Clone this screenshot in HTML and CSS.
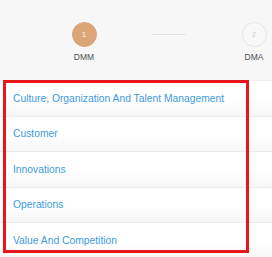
FILE: index.html
```html
<!DOCTYPE html>
<html lang="en">
<head>
    <meta charset="UTF-8">
    <meta name="viewport" content="width=device-width, initial-scale=1.0">
    <title>Assessment</title>
    <link rel="stylesheet" href="styles.css">
</head>
<body>
    <div class="stepper">
        <div class="step active">
            <div class="step-circle">1</div>
            <div class="step-label">DMM</div>
        </div>
        <div class="step-line"></div>
        <div class="step">
            <div class="step-circle">2</div>
            <div class="step-label">DMA</div>
        </div>
    </div>

    <div class="list-wrap">
        <ul class="dimension-list">
            <li><a href="#">Culture, Organization And Talent Management</a></li>
            <li><a href="#">Customer</a></li>
            <li><a href="#">Innovations</a></li>
            <li><a href="#">Operations</a></li>
            <li><a href="#">Value And Competition</a></li>
        </ul>
        <div class="highlight"></div>
    </div>
</body>
</html>
```

FILE: styles.css
```css
body {
    font-family: "Liberation Sans", Arial, sans-serif;
    margin: 0;
    padding: 0;
    background: #ffffff;
    width: 272px;
    height: 257px;
    overflow: hidden;
}

.stepper {
    background: #f7f7f7;
    height: 81px;
    border-bottom: 1px solid #efefef;
    display: grid;
    grid-template-columns: 50px 120px 50px;
    padding-left: 59px;
    padding-top: 22px;
    box-sizing: border-box;
}

.step {
    display: flex;
    flex-direction: column;
    align-items: center;
}

.step-circle {
    width: 25px;
    height: 25px;
    border-radius: 50%;
    border: 1px solid #e6e6e6;
    box-sizing: border-box;
    display: flex;
    align-items: center;
    justify-content: center;
    font-size: 7px;
    color: #c9cdd8;
    background: #f8f8f8;
}

.step.active .step-circle {
    background: #dba677;
    border-color: #dba677;
    color: #ffffff;
}

.step-label {
    margin-top: 5px;
    font-size: 8.5px;
    color: #4a4f55;
}

.step-line {
    width: 34px;
    height: 1px;
    background: #e3e3e3;
    margin: 12px auto 0;
}

.list-wrap {
    position: relative;
}

.dimension-list {
    list-style: none;
    margin: 0;
    padding: 0;
}

.dimension-list li {
    height: 35.5px;
    box-sizing: border-box;
    border-bottom: 1px solid #ebebeb;
    background: linear-gradient(#ffffff 55%, #f6f6f6);
    display: flex;
    align-items: center;
    padding-left: 13px;
}

.dimension-list a {
    color: #3d9be0;
    text-decoration: none;
    font-size: 10.3px;
}

.highlight {
    position: absolute;
    left: 3px;
    top: -1px;
    width: 246px;
    height: 173px;
    border: 3px solid #e8151b;
    box-sizing: border-box;
}
```
